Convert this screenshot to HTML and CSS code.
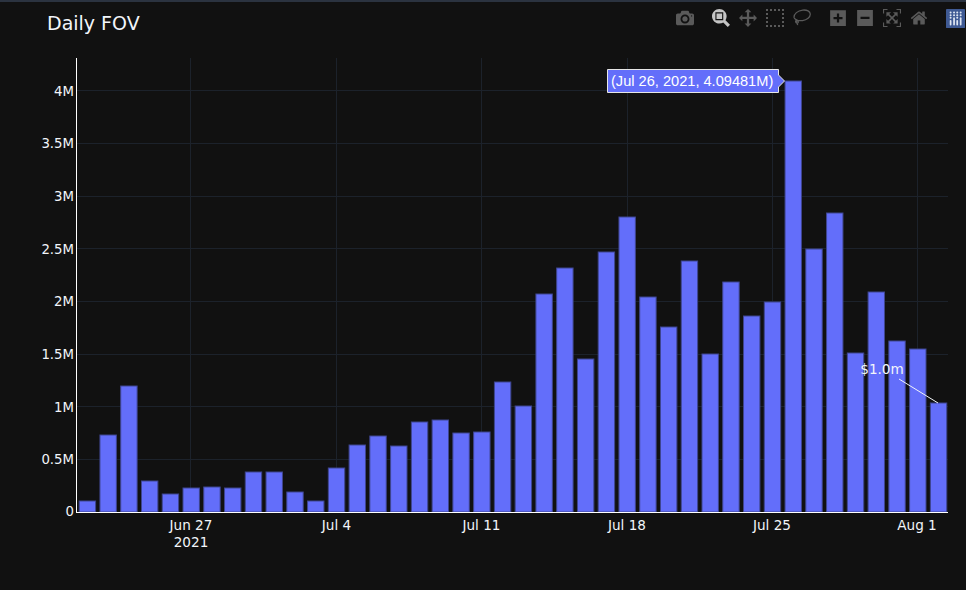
FILE: index.html
```html
<!DOCTYPE html>
<html lang="en">
<head>
<meta charset="utf-8">
<title>Daily FOV</title>
<link rel="stylesheet" href="styles.css">
</head>
<body>
<div class="topstrip"></div>
<main class="chart">
  <svg class="plot" width="966" height="588" viewBox="0 2 966 588">
    <g class="grid">
      <line x1="190.5" y1="58" x2="190.5" y2="512"/><line x1="336.5" y1="58" x2="336.5" y2="512"/><line x1="481.5" y1="58" x2="481.5" y2="512"/><line x1="627.5" y1="58" x2="627.5" y2="512"/><line x1="772.5" y1="58" x2="772.5" y2="512"/><line x1="917.5" y1="58" x2="917.5" y2="512"/>
      <line x1="77" y1="459.5" x2="948" y2="459.5"/><line x1="77" y1="406.5" x2="948" y2="406.5"/><line x1="77" y1="354.5" x2="948" y2="354.5"/><line x1="77" y1="301.5" x2="948" y2="301.5"/><line x1="77" y1="248.5" x2="948" y2="248.5"/><line x1="77" y1="196.5" x2="948" y2="196.5"/><line x1="77" y1="143.5" x2="948" y2="143.5"/><line x1="77" y1="90.5" x2="948" y2="90.5"/>
    </g>
    <g class="bars">
      <rect x="79.2" y="501" width="16.4" height="11"/><rect x="99.96" y="435" width="16.4" height="77"/><rect x="120.72" y="386" width="16.4" height="126"/><rect x="141.48" y="481" width="16.4" height="31"/><rect x="162.24" y="494" width="16.4" height="18"/><rect x="183" y="488" width="16.4" height="24"/><rect x="203.76" y="487" width="16.4" height="25"/><rect x="224.52" y="488" width="16.4" height="24"/><rect x="245.28" y="472" width="16.4" height="40"/><rect x="266.04" y="472" width="16.4" height="40"/><rect x="286.8" y="492" width="16.4" height="20"/><rect x="307.56" y="501" width="16.4" height="11"/><rect x="328.32" y="468" width="16.4" height="44"/><rect x="349.08" y="445" width="16.4" height="67"/><rect x="369.84" y="436" width="16.4" height="76"/><rect x="390.6" y="446" width="16.4" height="66"/><rect x="411.36" y="422" width="16.4" height="90"/><rect x="432.12" y="420" width="16.4" height="92"/><rect x="452.88" y="433" width="16.4" height="79"/><rect x="473.64" y="432" width="16.4" height="80"/><rect x="494.4" y="382" width="16.4" height="130"/><rect x="515.16" y="406" width="16.4" height="106"/><rect x="535.92" y="294" width="16.4" height="218"/><rect x="556.68" y="268" width="16.4" height="244"/><rect x="577.44" y="359" width="16.4" height="153"/><rect x="598.2" y="252" width="16.4" height="260"/><rect x="618.96" y="217" width="16.4" height="295"/><rect x="639.72" y="297" width="16.4" height="215"/><rect x="660.48" y="327" width="16.4" height="185"/><rect x="681.24" y="261" width="16.4" height="251"/><rect x="702" y="354" width="16.4" height="158"/><rect x="722.76" y="282" width="16.4" height="230"/><rect x="743.52" y="316" width="16.4" height="196"/><rect x="764.28" y="302" width="16.4" height="210"/><rect x="785.04" y="81" width="16.4" height="431"/><rect x="805.8" y="249" width="16.4" height="263"/><rect x="826.56" y="213" width="16.4" height="299"/><rect x="847.32" y="353" width="16.4" height="159"/><rect x="868.08" y="292" width="16.4" height="220"/><rect x="888.84" y="341" width="16.4" height="171"/><rect x="909.6" y="349" width="16.4" height="163"/><rect x="930.36" y="403" width="16.4" height="109"/>
    </g>
    <g class="axes">
      <line x1="76.5" y1="58" x2="76.5" y2="513"/>
      <line x1="76" y1="512.5" x2="948" y2="512.5"/>
    </g>
    <g class="yticks">
      <text x="74" y="516">0</text><text x="74" y="464">0.5M</text><text x="74" y="411.5">1M</text><text x="74" y="359">1.5M</text><text x="74" y="306">2M</text><text x="74" y="253.5">2.5M</text><text x="74" y="201">3M</text><text x="74" y="148">3.5M</text><text x="74" y="95.5">4M</text>
    </g>
    <g class="xticks">
      <text x="191" y="530">Jun 27</text><text x="191" y="547">2021</text><text x="336.5" y="530">Jul 4</text><text x="481.5" y="530">Jul 11</text><text x="627" y="530">Jul 18</text><text x="772" y="530">Jul 25</text><text x="917" y="530">Aug 1</text>
    </g>
    <text class="title" x="47" y="30">Daily FOV</text>
    <polyline class="arrow" points="899,379 938,403"/>
    <text class="note" x="882" y="374">$1.0m</text>
    <polygon class="hover-box" points="607.5,69.5 778.5,69.5 778.5,75 784.5,81 778.5,87 778.5,92.5 607.5,92.5"/>
    <text class="hover-text" x="611" y="86">(Jul 26, 2021, 4.09481M)</text>
  </svg>

  <nav class="modebar">
    <div class="mgroup">
      <a class="mbtn"><svg viewBox="0 0 1000 1000"><path transform="matrix(1 0 0 -1 0 850)" d="m500 450c-83 0-150-67-150-150 0-83 67-150 150-150 83 0 150 67 150 150 0 83-67 150-150 150z m400 150h-120c-16 0-34 13-39 29l-31 93c-6 15-23 28-40 28h-340c-16 0-34-13-39-28l-31-94c-6-15-23-28-40-28h-120c-55 0-100-45-100-100v-450c0-55 45-100 100-100h800c55 0 100 45 100 100v450c0 55-45 100-100 100z m-400-550c-138 0-250 112-250 250 0 138 112 250 250 250 138 0 250-112 250-250 0-138-112-250-250-250z m365 380c-19 0-35 16-35 35 0 19 16 35 35 35 19 0 35-16 35-35 0-19-16-35-35-35z"/></svg></a>
    </div>
    <div class="mgroup">
      <a class="mbtn active"><svg viewBox="0 0 1000 1000"><path transform="matrix(1 0 0 -1 0 850)" d="m1000-25l-250 251c40 63 63 138 63 218 0 224-182 406-407 406-224 0-406-182-406-406s183-406 407-406c80 0 155 22 218 62l250-250 125 125z m-812 250l0 438 437 0 0-438-437 0z m62 375l313 0 0-312-313 0 0 312z"/></svg></a>
      <a class="mbtn"><svg viewBox="0 0 1000 1000"><path transform="matrix(1 0 0 -1 0 850)" d="m1000 350l-187 188 0-125-250 0 0 250 125 0-188 187-187-187 125 0 0-250-250 0 0 125-188-188 186-187 0 125 252 0 0-250-125 0 187-188 188 188-125 0 0 250 250 0 0-126 187 188z"/></svg></a>
      <a class="mbtn"><svg viewBox="0 0 1000 1000"><path d="M0 0h111v111H0zM222 0h111v111H222zM444 0h111v111H444zM667 0h111v111H667zM889 0h111v111H889zM0 222h111v111H0zM889 222h111v111H889zM0 444h111v111H0zM889 444h111v111H889zM0 667h111v111H0zM889 667h111v111H889zM0 889h111v111H0zM222 889h111v111H222zM444 889h111v111H444zM667 889h111v111H667zM889 889h111v111H889z"/></svg></a>
      <a class="mbtn"><svg viewBox="0 0 1000 1000"><path class="lasso" d="M60 480C40 270 260 90 540 60c240-25 410 70 420 220 10 170-190 320-430 360-130 20-240 10-330-30C130 570 70 540 60 480zM240 590c-80 30-120 100-80 160 30 50 110 50 130 0 20-50-30-100-70-80-40 20-30 80 0 120 20 30 40 70 30 110"/></svg></a>
    </div>
    <div class="mgroup">
      <a class="mbtn"><svg viewBox="0 0 875 1000"><path transform="matrix(1 0 0 -1 0 850)" d="m1 787l0-875 875 0 0 875-875 0z m687-500l-187 0 0-187-125 0 0 187-188 0 0 125 188 0 0 187 125 0 0-187 187 0 0-125z"/></svg></a>
      <a class="mbtn"><svg viewBox="0 0 875 1000"><path transform="matrix(1 0 0 -1 0 850)" d="m0 788l0-876 875 0 0 876-875 0z m688-500l-500 0 0 125 500 0 0-125z"/></svg></a>
      <a class="mbtn"><svg viewBox="0 0 1000 1000"><path transform="matrix(1 0 0 -1 0 850)" d="m250 850l-187 0-63 0 0-62 0-188 63 0 0 188 187 0 0 62z m688 0l-188 0 0-62 188 0 0-188 62 0 0 188 0 62-62 0z m-875-938l0 188-63 0 0-188 0-62 63 0 187 0 0 62-187 0z m875 188l0-188-188 0 0-62 188 0 62 0 0 62 0 188-62 0z m-125 188l-1 0-93-94-156 156 156 156 92-93 2 0 0 250-250 0 0-2 93-92-156-156-156 156 94 92 0 2-250 0 0-250 0 0 93 93 157-156-157-156-93 94 0 0 0-250 250 0 0 0-94 93 156 157 156-157-93-93 0 0 250 0 0 250z"/></svg></a>
      <a class="mbtn"><svg viewBox="0 0 929 1000"><path transform="matrix(1 0 0 -1 0 850)" d="m786 296v-267q0-15-11-26t-25-10h-214v214h-143v-214h-214q-15 0-25 10t-11 26v267q0 1 0 2t0 2l321 264 321-264q1-1 1-4z m124 39l-34-41q-5-5-12-6h-2q-7 0-12 3l-386 322-386-322q-7-4-13-4-7 2-12 7l-35 41q-4 5-3 13t6 12l401 334q18 15 42 15t43-15l136-114v109q0 8 5 13t13 5h107q8 0 13-5t5-13v-227l122-102q5-5 6-12t-4-13z"/></svg></a>
    </div>
    <div class="mgroup">
      <a class="logo"><svg viewBox="0 0 132 132"><rect class="logo-bg" width="132" height="132" rx="6"/><g class="logo-bars"><rect x="26" y="76" width="12" height="38" rx="6"/><rect x="50" y="58" width="12" height="56" rx="6"/><rect x="72" y="76" width="12" height="38" rx="6"/><rect x="96" y="58" width="12" height="56" rx="6"/></g><g class="logo-dots"><circle cx="32" cy="24" r="7"/><circle cx="32" cy="43" r="7"/><circle cx="32" cy="60" r="7"/><circle cx="56" cy="24" r="7"/><circle cx="56" cy="43" r="7"/><circle cx="78" cy="24" r="7"/><circle cx="78" cy="43" r="7"/><circle cx="78" cy="60" r="7"/><circle cx="102" cy="24" r="7"/><circle cx="102" cy="43" r="7"/></g></svg></a>
    </div>
  </nav>
</main>
</body>
</html>
```

FILE: styles.css
```css
html, body {
  margin: 0;
  padding: 0;
  width: 966px;
  height: 590px;
  overflow: hidden;
  background: #111111;
}
.topstrip {
  height: 2px;
  background: #2b3340;
}
.chart {
  position: relative;
  height: 588px;
}
.plot {
  display: block;
  font-family: "DejaVu Sans", Verdana, sans-serif;
}
.grid line {
  stroke: #1c222b;
  stroke-width: 1;
}
.bars rect {
  fill: #636efa;
  stroke: #3f4690;
  stroke-width: 1;
}
.axes line {
  stroke: #ffffff;
  stroke-width: 1;
}
.yticks text {
  fill: #f2f5fa;
  font-size: 13.3px;
  text-anchor: end;
}
.xticks text {
  fill: #f2f5fa;
  font-size: 13.6px;
  text-anchor: middle;
}
.title {
  fill: #f2f5fa;
  font-size: 19px;
}
.note {
  fill: #f2f5fa;
  font-size: 13.6px;
  text-anchor: middle;
}
.arrow {
  fill: none;
  stroke: #f2f5fa;
  stroke-width: 1;
}
.hover-box {
  fill: #636efa;
  stroke: #e6e6e6;
  stroke-width: 1;
}
.hover-text {
  fill: #ffffff;
  font-family: "Liberation Sans", Arial, sans-serif;
  font-size: 14.6px;
}
.modebar {
  position: absolute;
  top: 7px;
  right: 1px;
  display: flex;
  gap: 18px;
}
.mgroup {
  display: flex;
  gap: 9px;
}
.mbtn {
  display: block;
  width: 18px;
  height: 18px;
}
.mbtn svg {
  display: block;
  width: 18px;
  height: 18px;
  fill: #5a5a5a;
}
.mbtn.active svg {
  fill: #c4c4c4;
}
.mbtn .lasso {
  fill: none;
  stroke: #5a5a5a;
  stroke-width: 70;
}
.logo {
  display: block;
  width: 19px;
  height: 19px;
}
.logo svg {
  display: block;
  width: 19px;
  height: 19px;
}
.logo-bg {
  fill: #3f5a94;
}
.logo-bars rect,
.logo-dots circle {
  fill: #dfe6f2;
}
```
